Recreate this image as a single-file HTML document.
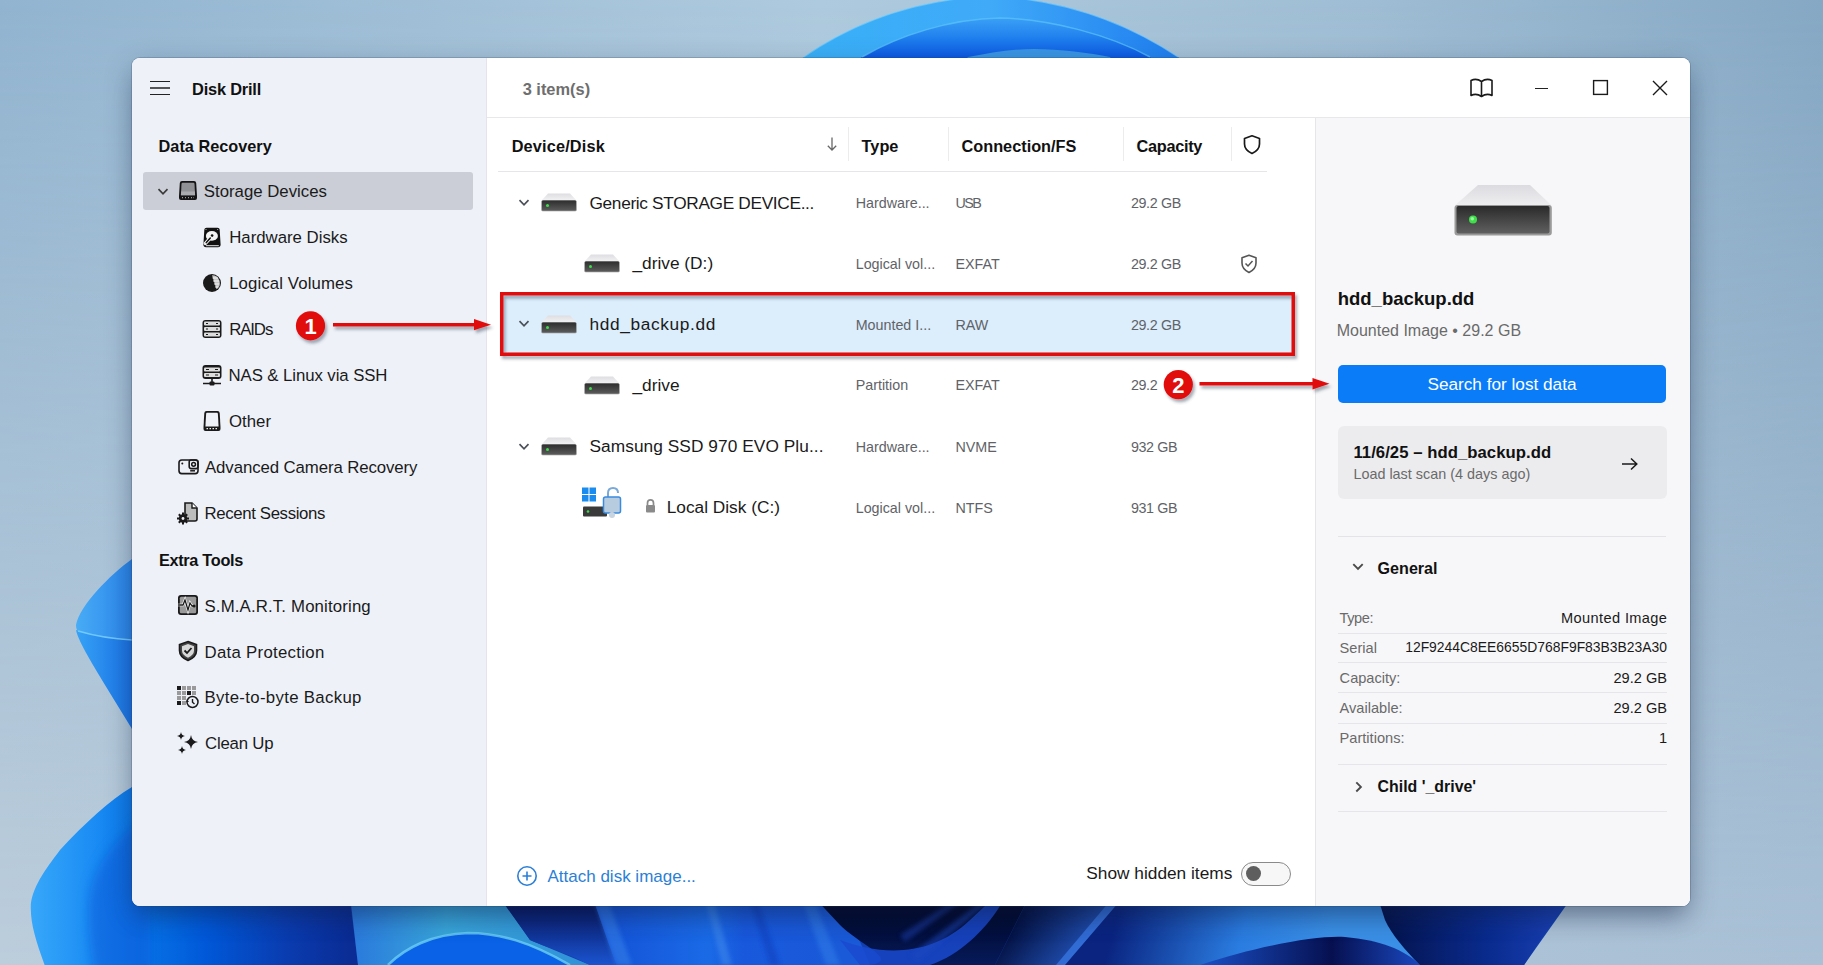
<!DOCTYPE html>
<html><head><meta charset="utf-8">
<style>
html,body{margin:0;padding:0;width:1823px;height:965px;overflow:hidden;}
body{position:relative;font-family:"Liberation Sans",sans-serif;background:#a7bdd3;}
.t{position:absolute;line-height:1;white-space:nowrap;}
</style></head><body>
<svg style="position:absolute;left:0;top:0" width="1823" height="965" viewBox="0 0 1823 965">
<defs>
<linearGradient id="bgg" x1="0" y1="0" x2="1823" y2="965" gradientUnits="userSpaceOnUse">
<stop offset="0" stop-color="#9dbcd6"/><stop offset="0.45" stop-color="#afc9dd"/><stop offset="1" stop-color="#a9c2d8"/>
</linearGradient>
<radialGradient id="bgr" cx="1800" cy="120" r="700" gradientUnits="userSpaceOnUse">
<stop offset="0" stop-color="#84a6c4"/><stop offset="1" stop-color="#84a6c4" stop-opacity="0"/>
</radialGradient>
<radialGradient id="bgl" cx="0" cy="200" r="500" gradientUnits="userSpaceOnUse">
<stop offset="0" stop-color="#98b6d2"/><stop offset="1" stop-color="#98b6d2" stop-opacity="0"/>
</radialGradient>
<linearGradient id="a1" x1="800" y1="0" x2="1180" y2="0" gradientUnits="userSpaceOnUse">
<stop offset="0" stop-color="#38b0f8"/><stop offset="0.5" stop-color="#40aaf8"/><stop offset="1" stop-color="#1f7ef0"/>
</linearGradient>
<linearGradient id="a2" x1="0" y1="18" x2="0" y2="58" gradientUnits="userSpaceOnUse">
<stop offset="0" stop-color="#3aa0f6"/><stop offset="0.5" stop-color="#2080ee"/><stop offset="1" stop-color="#0a58e4"/>
</linearGradient>
<linearGradient id="p1" x1="76" y1="0" x2="132" y2="0" gradientUnits="userSpaceOnUse">
<stop offset="0" stop-color="#48acf6"/><stop offset="1" stop-color="#2a84ea"/>
</linearGradient>
<linearGradient id="p2" x1="76" y1="0" x2="132" y2="0" gradientUnits="userSpaceOnUse">
<stop offset="0" stop-color="#36a2f6"/><stop offset="1" stop-color="#1a72e4"/>
</linearGradient>
<linearGradient id="l1" x1="30" y1="0" x2="350" y2="0" gradientUnits="userSpaceOnUse">
<stop offset="0" stop-color="#38a8fa"/><stop offset="0.2" stop-color="#1a8cf4"/><stop offset="0.35" stop-color="#0874e8"/><stop offset="0.55" stop-color="#0058d8"/><stop offset="0.8" stop-color="#0a3cb0"/><stop offset="1" stop-color="#0a2c94"/>
</linearGradient>
<linearGradient id="l1v" x1="0" y1="900" x2="0" y2="965" gradientUnits="userSpaceOnUse">
<stop offset="0" stop-color="#001050" stop-opacity="0.22"/><stop offset="1" stop-color="#001050" stop-opacity="0"/>
</linearGradient>
<linearGradient id="teal" x1="350" y1="0" x2="590" y2="0" gradientUnits="userSpaceOnUse">
<stop offset="0" stop-color="#2a78dc"/><stop offset="0.4" stop-color="#38a6da"/><stop offset="1" stop-color="#3090d8"/>
</linearGradient>
<linearGradient id="wedge" x1="0" y1="906" x2="0" y2="965" gradientUnits="userSpaceOnUse">
<stop offset="0" stop-color="#081660"/><stop offset="1" stop-color="#1a54d0"/>
</linearGradient>
<linearGradient id="mid" x1="600" y1="0" x2="840" y2="0" gradientUnits="userSpaceOnUse">
<stop offset="0" stop-color="#1452d6"/><stop offset="0.45" stop-color="#1a6ae6"/><stop offset="0.6" stop-color="#1858dc"/><stop offset="1" stop-color="#1a5ad8"/>
</linearGradient>
<linearGradient id="r1" x1="1120" y1="906" x2="1320" y2="965" gradientUnits="userSpaceOnUse">
<stop offset="0" stop-color="#0a2480"/><stop offset="0.6" stop-color="#2a7ce0"/><stop offset="1" stop-color="#3a90e6"/>
</linearGradient>
<linearGradient id="r2" x1="1380" y1="0" x2="1565" y2="0" gradientUnits="userSpaceOnUse">
<stop offset="0" stop-color="#04124a"/><stop offset="0.6" stop-color="#0a2c90"/><stop offset="1" stop-color="#1a40b4"/>
</linearGradient>
<linearGradient id="blob" x1="1200" y1="0" x2="1420" y2="0" gradientUnits="userSpaceOnUse">
<stop offset="0" stop-color="#1a50c8"/><stop offset="0.6" stop-color="#061050"/><stop offset="1" stop-color="#1a48c0"/>
</linearGradient>
<linearGradient id="dk" x1="0" y1="906" x2="0" y2="965" gradientUnits="userSpaceOnUse">
<stop offset="0" stop-color="#010626"/><stop offset="1" stop-color="#061a5a"/>
</linearGradient>
<linearGradient id="nv" x1="1030" y1="906" x2="1100" y2="965" gradientUnits="userSpaceOnUse">
<stop offset="0" stop-color="#031040"/><stop offset="1" stop-color="#2a64d8"/>
</linearGradient>
<linearGradient id="lp" x1="30" y1="0" x2="140" y2="0" gradientUnits="userSpaceOnUse">
<stop offset="0" stop-color="#3aa8f8"/><stop offset="0.5" stop-color="#3aa4f4"/><stop offset="1" stop-color="#2a8cf0"/>
</linearGradient>
<linearGradient id="lp2" x1="84" y1="0" x2="140" y2="0" gradientUnits="userSpaceOnUse">
<stop offset="0" stop-color="#2284ee" stop-opacity="0.3"/><stop offset="0.4" stop-color="#1a74e8"/><stop offset="1" stop-color="#1466e0"/>
</linearGradient>
<linearGradient id="topRow" x1="0" y1="0" x2="1823" y2="0" gradientUnits="userSpaceOnUse">
<stop offset="0" stop-color="#92b4d0"/><stop offset="0.45" stop-color="#aecade"/><stop offset="0.75" stop-color="#9fbdd4"/><stop offset="1" stop-color="#86a8c4"/>
</linearGradient>
<linearGradient id="botRow" x1="0" y1="0" x2="1823" y2="0" gradientUnits="userSpaceOnUse">
<stop offset="0" stop-color="#bccddb"/><stop offset="0.5" stop-color="#b2c7d9"/><stop offset="1" stop-color="#a9c0d5"/>
</linearGradient>
<linearGradient id="vg" x1="0" y1="0" x2="0" y2="965" gradientUnits="userSpaceOnUse">
<stop offset="0" stop-color="#000"/><stop offset="1" stop-color="#fff"/>
</linearGradient>
<mask id="vmask"><rect width="1823" height="965" fill="url(#vg)"/></mask>
<filter id="blur6" x="-50%" y="-50%" width="200%" height="200%"><feGaussianBlur stdDeviation="6"/></filter>
<filter id="blur2" x="-50%" y="-50%" width="200%" height="200%"><feGaussianBlur stdDeviation="2"/></filter>
</defs>
<rect width="1823" height="965" fill="url(#topRow)"/>
<rect width="1823" height="965" fill="url(#botRow)" mask="url(#vmask)"/>
<!-- top arch -->
<path d="M790 66 L804 57 C 850 25, 910 0, 990 -4 C 1070 0, 1130 25, 1178 57 L1190 66 Z" fill="url(#a1)"/>
<path d="M850 66 L862 57 C 900 35, 950 19, 1000 18 C 1050 19, 1110 35, 1150 57 L1160 66 Z" fill="url(#a2)"/>
<path d="M862 57 C 900 35, 950 19, 1000 18 C 1050 19, 1110 35, 1150 57" fill="none" stroke="#5cc4fa" stroke-width="1.5" opacity="0.7"/>
<path d="M804 57 C 850 25, 910 0, 990 -4 C 1070 0, 1130 25, 1178 57" fill="none" stroke="#7ad0fa" stroke-width="1.2" opacity="0.6"/>
<path d="M960 66 L968 57 C 990 53, 1010 49, 1034 49 C 1060 49, 1090 53, 1110 57 L1115 66 Z" fill="#3a96e4"/>
<!-- left upper petal -->
<path d="M140 540 L132 559 C 110 575, 80 605, 76 625 C 76 632, 80 634, 90 636 C 105 638, 120 640, 140 640 Z" fill="url(#p1)"/>
<path d="M76 630 C 78 640, 90 660, 105 685 L132 729 L140 740 L140 640 C 120 640, 100 637, 76 630 Z" fill="url(#p2)"/>
<path d="M78 631 C 95 636, 115 639, 132 640" fill="none" stroke="#7fd6ff" stroke-width="1.5" opacity="0.8"/>
<!-- left lower petal -->
<path d="M132 900 L1570 900 L1524 965 L132 965 Z" fill="#1240b0"/>
<path d="M140 780 L132 787 C 110 800, 85 823, 60 850 C 45 870, 30 890, 30.8 909 C 31 925, 36 941, 44.6 965 L358 965 L350 900 L140 900 Z" fill="url(#l1)"/>
<path d="M150 815 C 118 835, 96 862, 90 892 C 86 915, 90 945, 94 975 L150 975 Z" fill="#0a5ad8" opacity="0.55" filter="url(#blur6)"/>
<path d="M350 895 L498 895 L530 940 L590 965 L358 965 Z" fill="url(#teal)"/>
<path d="M388 965 C 405 948, 432 934, 468 933 C 500 933, 530 942, 570 965 Z" fill="#0a62e6"/>
<path d="M388 965 C 405 948, 432 934, 468 933 C 500 933, 530 942, 570 965" fill="none" stroke="#6cd0f4" stroke-width="2.5" opacity="0.8"/>
<path d="M498 895 L592 895 L616 965 L590 965 C 565 952, 540 945, 530 940 Z" fill="url(#wedge)"/>
<path d="M592 895 L840 895 L870 965 L616 965 Z" fill="url(#mid)"/>
<path d="M592 895 L606 895 L632 965 L616 965 Z" fill="#3a86ea" opacity="0.5" filter="url(#blur2)"/>
<path d="M704 895 L712 895 L732 965 L722 965 Z" fill="#4a92ee" opacity="0.45" filter="url(#blur2)"/>
<path d="M748 895 L756 895 L780 965 L770 965 Z" fill="#0a3ab8" opacity="0.45" filter="url(#blur2)"/>
<path d="M800 895 L812 895 L840 965 L826 965 Z" fill="#3a8aee" opacity="0.4" filter="url(#blur2)"/>
<path d="M812 895 L1030 895 L995 965 L870 965 C 900 960, 860 945, 840 925 Z" fill="url(#dk)"/>
<path d="M840 940 C 880 955, 930 958, 970 920 L985 906 L1000 906 C 985 930, 960 955, 930 965 L860 965 Z" fill="#1a4ad0" opacity="0.85"/>
<path d="M900 935 L962 895 L970 895 L905 942 Z" fill="#1a40b0" opacity="0.5" filter="url(#blur2)"/>
<path d="M910 955 L990 895 L998 895 L918 962 Z" fill="#1a48c0" opacity="0.5" filter="url(#blur2)"/>
<path d="M1030 895 L1125 895 L1065 965 L995 965 Z" fill="url(#nv)"/>
<path d="M1115 895 L1127 895 L1068 965 L1056 965 Z" fill="#3a7ae8" opacity="0.7"/>
<path d="M1125 895 L1380 895 C 1385 920, 1400 945, 1420 965 L1065 965 Z" fill="url(#r1)"/>
<path d="M1200 965 C 1260 945, 1320 935, 1345 937 C 1380 940, 1405 950, 1420 965 Z" fill="url(#blob)"/>
<path d="M1377 895 L1570 895 L1524 965 L1420 965 C 1405 950, 1392 935, 1385 920 Z" fill="url(#r2)"/>
</svg>
<div style="position:absolute;left:132px;top:58px;width:1558px;height:848px;border-radius:8px;overflow:hidden;box-shadow:0 0 0 1px rgba(40,60,80,0.22),0 8px 28px rgba(30,50,80,0.30),0 16px 24px -8px rgba(0,10,50,0.28);background:#fff;">
<div style="position:absolute;left:-132px;top:-58px;width:1823px;height:965px;">
<div style="position:absolute;left:132px;top:58px;width:354px;height:848px;background:#eef1f8;"></div>
<div style="position:absolute;left:486px;top:58px;width:1px;height:848px;background:#e3e5ea;"></div>
<div style="position:absolute;left:487px;top:58px;width:1203px;height:848px;background:#ffffff;"></div>
<div style="position:absolute;left:1315px;top:117px;width:375px;height:789px;background:#f7f7f9;"></div>
<div style="position:absolute;left:1315px;top:117px;width:1px;height:789px;background:#e6e6ea;"></div>
<div style="position:absolute;left:487px;top:117px;width:1203px;height:1px;background:#e8e8ea;"></div>
<div style="position:absolute;left:150px;top:80.5px;width:20px;height:1.5px;background:#222;"></div>
<div style="position:absolute;left:150px;top:87px;width:20px;height:1.5px;background:#555;"></div>
<div style="position:absolute;left:150px;top:93.5px;width:20px;height:1.5px;background:#222;"></div>
<div class="t" style="left:192.0px;top:80.8px;font-size:16.4px;font-weight:700;color:#111;letter-spacing:-0.200px;">Disk Drill</div>
<div class="t" style="left:522.7px;top:80.8px;font-size:16.4px;font-weight:700;color:#6e6e6e;">3 item(s)</div>
<svg style="position:absolute;left:1468px;top:76px" width="27" height="23" viewBox="0 0 27 23"><path d="M13.5 5.5 C 10 3, 6 3, 3 4.5 V 19.5 C 6 18, 10 18, 13.5 20.5 C 17 18, 21 18, 24 19.5 V 4.5 C 21 3, 17 3, 13.5 5.5 Z M13.5 5.5 V 20.5" fill="none" stroke="#1a1a1a" stroke-width="1.6" stroke-linejoin="round"/></svg>
<div style="position:absolute;left:1535px;top:87.8px;width:12.5px;height:1.2000000000000028px;background:#222;"></div>
<svg style="position:absolute;left:1592px;top:79px" width="17" height="17" viewBox="0 0 17 17"><rect x="1.6" y="1.6" width="13.8" height="13.8" fill="none" stroke="#1a1a1a" stroke-width="1.4"/></svg>
<svg style="position:absolute;left:1651px;top:79px" width="18" height="18" viewBox="0 0 18 18"><path d="M2 2 L16 16 M16 2 L2 16" stroke="#1a1a1a" stroke-width="1.4"/></svg>
<div class="t" style="left:158.6px;top:138.1px;font-size:16.3px;font-weight:700;color:#111;">Data Recovery</div>
<div style="position:absolute;left:143px;top:172px;width:330px;height:37.5px;background:#cbced6;border-radius:3px;"></div>
<svg style="position:absolute;left:157.2px;top:187.6px" width="12" height="8" viewBox="0 0 12 8"><path d="M1.5 1.2 L6 5.8 L10.5 1.2" fill="none" stroke="#3a3a3a" stroke-width="1.7"/></svg>
<svg style="position:absolute;left:178px;top:179.3px" width="20" height="22" viewBox="0 0 20 22"><path d="M4 2 H16 Q18 2 18.2 4 L19 17 V19 Q19 21 17 21 H3 Q1 21 1 19 V17 L1.8 4 Q2 2 4 2 Z" fill="#141414"/><path d="M4.5 3.8 H15.5 Q16.4 3.8 16.5 5 L17.1 16.3 H2.9 L3.5 5 Q3.6 3.8 4.5 3.8 Z" fill="#8f9195"/><path d="M3.2 12.5 H16.8 L17.1 16.3 H2.9 Z" fill="#a9abaf"/><path d="M4 18.6 H5 M7 18.6 H8 M10 18.6 H11 M13 18.6 H14 M15.5 18.6 H16" stroke="#9a9a9a" stroke-width="1.2"/></svg>
<div class="t" style="left:203.8px;top:184.4px;font-size:16.8px;font-weight:400;color:#1a1a1a;">Storage Devices</div>
<svg style="position:absolute;left:203px;top:226.5px" width="19" height="21" viewBox="0 0 19 21"><path d="M3.5 0.7 H14.5 Q16.5 0.7 16.7 2.7 L17.6 17.5 Q17.6 20.3 15 20.3 H3 Q0.4 20.3 0.4 17.5 L1.3 2.7 Q1.5 0.7 3.5 0.7 Z" fill="#111"/><ellipse cx="8.9" cy="8.9" rx="6" ry="4.9" fill="#f4f4f4"/><circle cx="9.1" cy="8.6" r="1.3" fill="#111"/><path d="M2.4 16.4 L7.3 11" stroke="#f4f4f4" stroke-width="3.4" stroke-linecap="round"/><path d="M2.6 16.2 L7.3 11" stroke="#111" stroke-width="1.5" stroke-linecap="round"/><circle cx="2.6" cy="16.2" r="0.7" fill="#fff"/><path d="M3 18.6 H15.8" stroke="#bdbdbd" stroke-width="1.2"/><circle cx="3" cy="2.5" r="0.5" fill="#ddd"/><circle cx="14.7" cy="2.5" r="0.5" fill="#ddd"/></svg>
<div class="t" style="left:229.2px;top:229.5px;font-size:16.8px;font-weight:400;color:#1a1a1a;">Hardware Disks</div>
<svg style="position:absolute;left:202px;top:273px" width="20" height="20" viewBox="0 0 20 20"><circle cx="10" cy="10" r="9" fill="#1a1a1a"/><path d="M10 2.3 A7.7 7.7 0 0 1 14.5 16.3 Z" fill="#c8c8c8"/><path d="M10.5 5 H16 M11 8 H17.3 M12 11 H17.3 M13 14 H16" stroke="#fff" stroke-width="0.8"/></svg>
<div class="t" style="left:229.2px;top:275.7px;font-size:16.8px;font-weight:400;color:#1a1a1a;letter-spacing:0.100px;">Logical Volumes</div>
<svg style="position:absolute;left:201px;top:319px" width="22" height="20" viewBox="0 0 22 20"><rect x="1.5" y="1" width="19" height="18" rx="3" fill="#1a1a1a"/><rect x="3" y="2.5" width="16" height="4" rx="1" fill="#ddd"/><rect x="3" y="8" width="16" height="4" rx="1" fill="#ddd"/><rect x="3" y="13.5" width="16" height="4" rx="1" fill="#ddd"/><path d="M5 4.5 H7 M5 10 H7 M5 15.5 H7 M15 4.5 H17 M15 10 H17 M15 15.5 H17" stroke="#1a1a1a" stroke-width="1.2"/></svg>
<div class="t" style="left:229.2px;top:321.8px;font-size:16.8px;font-weight:400;color:#1a1a1a;letter-spacing:-1.100px;">RAIDs</div>
<svg style="position:absolute;left:201px;top:364px" width="22" height="22" viewBox="0 0 22 22"><rect x="1.5" y="1" width="19" height="14" rx="3" fill="#1a1a1a"/><rect x="3" y="3.5" width="16" height="4" rx="1" fill="#ddd"/><rect x="3" y="9" width="16" height="4" rx="1" fill="#ddd"/><path d="M5 5.5 H8 M5 11 H8 M14 5.5 H17 M14 11 H17" stroke="#1a1a1a" stroke-width="1.2"/><path d="M11 15 V19 M2 19.5 H20" stroke="#1a1a1a" stroke-width="1.6"/><rect x="8.5" y="17.5" width="5" height="4" rx="1" fill="#1a1a1a"/></svg>
<div class="t" style="left:228.5px;top:367.7px;font-size:16.8px;font-weight:400;color:#1a1a1a;letter-spacing:-0.080px;">NAS &amp; Linux via SSH</div>
<svg style="position:absolute;left:202px;top:410px" width="20" height="22" viewBox="0 0 20 22"><path d="M4.5 1 H15.5 Q17.5 1 17.7 3 L18.5 17 V19 Q18.5 21 16.5 21 H3.5 Q1.5 21 1.5 19 V17 L2.3 3 Q2.5 1 4.5 1 Z" fill="#1a1a1a"/><path d="M5 2.8 H15 Q15.8 2.8 15.9 4 L16.6 16.5 H3.4 L4.1 4 Q4.2 2.8 5 2.8 Z" fill="#eef1f8"/><path d="M4.5 18.7 H6 M7.5 18.7 H9 M10.5 18.7 H12 M13.5 18.7 H15" stroke="#eee" stroke-width="1.2"/></svg>
<div class="t" style="left:229.0px;top:413.7px;font-size:16.8px;font-weight:400;color:#1a1a1a;">Other</div>
<svg style="position:absolute;left:177.5px;top:459.2px" width="21" height="16" viewBox="0 0 21 16"><rect x="1" y="1" width="19" height="13.6" rx="2.8" fill="none" stroke="#1a1a1a" stroke-width="1.6"/><rect x="11.2" y="1" width="8.8" height="8.6" rx="2" fill="none" stroke="#1a1a1a" stroke-width="1.6"/><circle cx="15.6" cy="5.3" r="1.9" fill="none" stroke="#1a1a1a" stroke-width="1.5"/><circle cx="4.3" cy="4.6" r="1" fill="#1a1a1a"/><path d="M12.2 11.8 H17" stroke="#1a1a1a" stroke-width="1.5"/></svg>
<div class="t" style="left:205.0px;top:459.5px;font-size:16.8px;font-weight:400;color:#1a1a1a;letter-spacing:-0.090px;">Advanced Camera Recovery</div>
<svg style="position:absolute;left:177px;top:502px" width="22" height="23" viewBox="0 0 22 23"><path d="M8 1 H15 L20 6 V17 Q20 19 18 19 H10 Q8 19 8 17 Z" fill="#bcbcbc" stroke="#1a1a1a" stroke-width="1.6"/><path d="M15 1 V6 H20" fill="#fff" stroke="#1a1a1a" stroke-width="1.4"/><circle cx="6" cy="16.5" r="4.2" fill="#1a1a1a"/><path d="M6 10.5 V22.5 M0 16.5 H12 M1.8 12.3 L10.2 20.7 M10.2 12.3 L1.8 20.7" stroke="#1a1a1a" stroke-width="2"/><circle cx="6" cy="16.5" r="1.4" fill="#eef1f8"/></svg>
<div class="t" style="left:204.5px;top:506.2px;font-size:16.8px;font-weight:400;color:#1a1a1a;letter-spacing:-0.360px;">Recent Sessions</div>
<div class="t" style="left:158.9px;top:552.1px;font-size:16.3px;font-weight:700;color:#111;letter-spacing:-0.300px;">Extra Tools</div>
<svg style="position:absolute;left:177px;top:594px" width="22" height="22" viewBox="0 0 22 22"><rect x="1" y="1" width="20" height="20" rx="3" fill="#1a1a1a"/><rect x="2.8" y="2.8" width="16.4" height="16.4" rx="1.5" fill="#9a9a9a"/><path d="M1 11 H6 L8 6 L11 16 L13 9 L15 12 H17" fill="none" stroke="#fff" stroke-width="2.6"/><path d="M1 11 H6 L8 6 L11 16 L13 9 L15 12 H17" fill="none" stroke="#1a1a1a" stroke-width="1.3"/><circle cx="17" cy="12" r="1.6" fill="#1a1a1a"/></svg>
<div class="t" style="left:204.5px;top:598.7px;font-size:16.8px;font-weight:400;color:#1a1a1a;letter-spacing:0.150px;">S.M.A.R.T. Monitoring</div>
<svg style="position:absolute;left:178px;top:640px" width="20" height="22" viewBox="0 0 20 22"><path d="M10 1.5 L18.5 4.5 V10.5 Q18.5 17 10 20.5 Q1.5 17 1.5 10.5 V4.5 Z" fill="#444" stroke="#1a1a1a" stroke-width="1.6"/><path d="M10 4 L16 6.2 V10.5 Q16 15 10 17.8 Q4 15 4 10.5 V6.2 Z" fill="#d8d8d8"/><path d="M6.5 10.5 L9 13 L13.5 8" fill="none" stroke="#1a1a1a" stroke-width="1.8"/></svg>
<div class="t" style="left:204.5px;top:644.7px;font-size:16.8px;font-weight:400;color:#1a1a1a;letter-spacing:0.290px;">Data Protection</div>
<svg style="position:absolute;left:176px;top:685px" width="24" height="24" viewBox="0 0 24 24"><g fill="#1a1a1a"><rect x="1" y="1" width="4" height="4"/><rect x="11" y="6" width="4" height="4"/><rect x="1" y="16" width="4" height="4"/></g><g fill="#9a9a9a"><rect x="6" y="1" width="4" height="4"/><rect x="11" y="1" width="4" height="4"/><rect x="16" y="1" width="4" height="4"/><rect x="1" y="6" width="4" height="4"/><rect x="6" y="6" width="4" height="4"/><rect x="16" y="6" width="4" height="4"/><rect x="1" y="11" width="4" height="4"/><rect x="6" y="11" width="4" height="4"/><rect x="6" y="16" width="4" height="4"/></g><circle cx="16.5" cy="17" r="5.5" fill="#eef1f8" stroke="#1a1a1a" stroke-width="1.5"/><path d="M16.5 14 V17.3 L18.5 19" fill="none" stroke="#1a1a1a" stroke-width="1.4"/><path d="M10 17 L11.5 15 L13 17" fill="#1a1a1a"/></svg>
<div class="t" style="left:204.5px;top:690.4px;font-size:16.8px;font-weight:400;color:#1a1a1a;letter-spacing:0.320px;">Byte-to-byte Backup</div>
<svg style="position:absolute;left:176px;top:731px" width="24" height="24" viewBox="0 0 24 24"><path d="M15 4 Q15.8 10.2 22 11 Q15.8 11.8 15 18 Q14.2 11.8 8 11 Q14.2 10.2 15 4 Z" fill="#1a1a1a"/><path d="M5 1 Q5.4 4.6 9 5 Q5.4 5.4 5 9 Q4.6 5.4 1 5 Q4.6 4.6 5 1 Z" fill="#1a1a1a"/><path d="M6 15 Q6.4 18.6 10 19 Q6.4 19.4 6 23 Q5.6 19.4 2 19 Q5.6 18.6 6 15 Z" fill="#1a1a1a"/></svg>
<div class="t" style="left:205.0px;top:736.2px;font-size:16.8px;font-weight:400;color:#1a1a1a;letter-spacing:-0.200px;">Clean Up</div>
<div class="t" style="left:511.7px;top:138.3px;font-size:16.3px;font-weight:700;color:#111;letter-spacing:0.160px;">Device/Disk</div>
<svg style="position:absolute;left:826px;top:136px" width="12" height="16" viewBox="0 0 12 16"><path d="M6 1.5 V14 M1.8 9.8 L6 14 L10.2 9.8" fill="none" stroke="#666" stroke-width="1.3"/></svg>
<div style="position:absolute;left:848px;top:127px;width:1px;height:34px;background:#ececec;"></div>
<div style="position:absolute;left:948px;top:127px;width:1px;height:34px;background:#ececec;"></div>
<div style="position:absolute;left:1123px;top:127px;width:1px;height:34px;background:#ececec;"></div>
<div style="position:absolute;left:1231px;top:127px;width:1px;height:34px;background:#ececec;"></div>
<div class="t" style="left:861.6px;top:138.3px;font-size:16.3px;font-weight:700;color:#111;">Type</div>
<div class="t" style="left:961.5px;top:138.3px;font-size:16.3px;font-weight:700;color:#111;">Connection/FS</div>
<div class="t" style="left:1136.5px;top:138.3px;font-size:16.3px;font-weight:700;color:#111;letter-spacing:-0.280px;">Capacity</div>
<svg style="position:absolute;left:1242px;top:134px" width="20" height="21" viewBox="0 0 20 21"><path d="M10 1.8 L17.5 4.5 V10 Q17.5 16 10 19.5 Q2.5 16 2.5 10 V4.5 Z" fill="none" stroke="#1a1a1a" stroke-width="1.7" stroke-linejoin="round"/></svg>
<div style="position:absolute;left:498px;top:171px;width:769px;height:1px;background:#e6e6e8;"></div>
<div style="position:absolute;left:500px;top:295px;width:795px;height:58px;background:#dcedfc;"></div>
<svg style="position:absolute;left:517.5px;top:198.7px" width="12" height="8" viewBox="0 0 12 8"><path d="M1.5 1.2 L6 5.8 L10.5 1.2" fill="none" stroke="#4a4f58" stroke-width="1.7"/></svg>
<svg style="position:absolute;left:540.5px;top:193.2px" width="36" height="19" viewBox="0 0 36 19"><defs><linearGradient id="dg" x1="0" y1="0" x2="0" y2="1"><stop offset="0" stop-color="#2e2e2e"/><stop offset="1" stop-color="#5a5a5a"/></linearGradient><linearGradient id="tg" x1="0" y1="0" x2="0" y2="1"><stop offset="0" stop-color="#dedee2"/><stop offset="1" stop-color="#f2f2f4"/></linearGradient></defs><path d="M7 0.5 H29 L35.5 7.5 H0.5 Z" fill="url(#tg)"/><rect x="0.3" y="7.3" width="35.4" height="11" rx="1.5" fill="#8c8c8c"/><rect x="1" y="7.5" width="34" height="10" rx="1" fill="url(#dg)"/><circle cx="6.5" cy="12.5" r="1.5" fill="#3ddc4a"/></svg>
<div class="t" style="left:589.5px;top:194.5px;font-size:17.3px;font-weight:400;color:#1a1a1a;letter-spacing:-0.340px;">Generic STORAGE DEVICE...</div>
<div class="t" style="left:855.7px;top:196.0px;font-size:14.3px;font-weight:400;color:#5f6368;">Hardware...</div>
<div class="t" style="left:955.4px;top:196.0px;font-size:14.3px;font-weight:400;color:#5f6368;letter-spacing:-1.500px;">USB</div>
<div class="t" style="left:1130.9px;top:196.0px;font-size:14.3px;font-weight:400;color:#5f6368;letter-spacing:-0.350px;">29.2 GB</div>
<svg style="position:absolute;left:583.5px;top:253.8px" width="36" height="19" viewBox="0 0 36 19"><defs><linearGradient id="dg" x1="0" y1="0" x2="0" y2="1"><stop offset="0" stop-color="#2e2e2e"/><stop offset="1" stop-color="#5a5a5a"/></linearGradient><linearGradient id="tg" x1="0" y1="0" x2="0" y2="1"><stop offset="0" stop-color="#dedee2"/><stop offset="1" stop-color="#f2f2f4"/></linearGradient></defs><path d="M7 0.5 H29 L35.5 7.5 H0.5 Z" fill="url(#tg)"/><rect x="0.3" y="7.3" width="35.4" height="11" rx="1.5" fill="#8c8c8c"/><rect x="1" y="7.5" width="34" height="10" rx="1" fill="url(#dg)"/><circle cx="6.5" cy="12.5" r="1.5" fill="#3ddc4a"/></svg>
<div class="t" style="left:632.5px;top:255.1px;font-size:17.3px;font-weight:400;color:#1a1a1a;">_drive (D:)</div>
<div class="t" style="left:855.7px;top:256.6px;font-size:14.3px;font-weight:400;color:#5f6368;">Logical vol...</div>
<div class="t" style="left:955.4px;top:256.6px;font-size:14.3px;font-weight:400;color:#5f6368;">EXFAT</div>
<div class="t" style="left:1130.9px;top:256.6px;font-size:14.3px;font-weight:400;color:#5f6368;letter-spacing:-0.350px;">29.2 GB</div>
<svg style="position:absolute;left:517.5px;top:320.3px" width="12" height="8" viewBox="0 0 12 8"><path d="M1.5 1.2 L6 5.8 L10.5 1.2" fill="none" stroke="#4a4f58" stroke-width="1.7"/></svg>
<svg style="position:absolute;left:540.5px;top:314.8px" width="36" height="19" viewBox="0 0 36 19"><defs><linearGradient id="dg" x1="0" y1="0" x2="0" y2="1"><stop offset="0" stop-color="#2e2e2e"/><stop offset="1" stop-color="#5a5a5a"/></linearGradient><linearGradient id="tg" x1="0" y1="0" x2="0" y2="1"><stop offset="0" stop-color="#dedee2"/><stop offset="1" stop-color="#f2f2f4"/></linearGradient></defs><path d="M7 0.5 H29 L35.5 7.5 H0.5 Z" fill="url(#tg)"/><rect x="0.3" y="7.3" width="35.4" height="11" rx="1.5" fill="#8c8c8c"/><rect x="1" y="7.5" width="34" height="10" rx="1" fill="url(#dg)"/><circle cx="6.5" cy="12.5" r="1.5" fill="#3ddc4a"/></svg>
<div class="t" style="left:589.5px;top:316.1px;font-size:17.3px;font-weight:400;color:#1a1a1a;letter-spacing:0.640px;">hdd_backup.dd</div>
<div class="t" style="left:855.7px;top:317.6px;font-size:14.3px;font-weight:400;color:#5f6368;">Mounted I...</div>
<div class="t" style="left:955.4px;top:317.6px;font-size:14.3px;font-weight:400;color:#5f6368;">RAW</div>
<div class="t" style="left:1130.9px;top:317.6px;font-size:14.3px;font-weight:400;color:#5f6368;letter-spacing:-0.350px;">29.2 GB</div>
<svg style="position:absolute;left:583.5px;top:375.5px" width="36" height="19" viewBox="0 0 36 19"><defs><linearGradient id="dg" x1="0" y1="0" x2="0" y2="1"><stop offset="0" stop-color="#2e2e2e"/><stop offset="1" stop-color="#5a5a5a"/></linearGradient><linearGradient id="tg" x1="0" y1="0" x2="0" y2="1"><stop offset="0" stop-color="#dedee2"/><stop offset="1" stop-color="#f2f2f4"/></linearGradient></defs><path d="M7 0.5 H29 L35.5 7.5 H0.5 Z" fill="url(#tg)"/><rect x="0.3" y="7.3" width="35.4" height="11" rx="1.5" fill="#8c8c8c"/><rect x="1" y="7.5" width="34" height="10" rx="1" fill="url(#dg)"/><circle cx="6.5" cy="12.5" r="1.5" fill="#3ddc4a"/></svg>
<div class="t" style="left:632.5px;top:376.8px;font-size:17.3px;font-weight:400;color:#1a1a1a;">_drive</div>
<div class="t" style="left:855.7px;top:378.3px;font-size:14.3px;font-weight:400;color:#5f6368;">Partition</div>
<div class="t" style="left:955.4px;top:378.3px;font-size:14.3px;font-weight:400;color:#5f6368;">EXFAT</div>
<div class="t" style="left:1130.9px;top:378.3px;font-size:14.3px;font-weight:400;color:#5f6368;letter-spacing:-0.350px;">29.2</div>
<svg style="position:absolute;left:517.5px;top:442.5px" width="12" height="8" viewBox="0 0 12 8"><path d="M1.5 1.2 L6 5.8 L10.5 1.2" fill="none" stroke="#4a4f58" stroke-width="1.7"/></svg>
<svg style="position:absolute;left:540.5px;top:437.0px" width="36" height="19" viewBox="0 0 36 19"><defs><linearGradient id="dg" x1="0" y1="0" x2="0" y2="1"><stop offset="0" stop-color="#2e2e2e"/><stop offset="1" stop-color="#5a5a5a"/></linearGradient><linearGradient id="tg" x1="0" y1="0" x2="0" y2="1"><stop offset="0" stop-color="#dedee2"/><stop offset="1" stop-color="#f2f2f4"/></linearGradient></defs><path d="M7 0.5 H29 L35.5 7.5 H0.5 Z" fill="url(#tg)"/><rect x="0.3" y="7.3" width="35.4" height="11" rx="1.5" fill="#8c8c8c"/><rect x="1" y="7.5" width="34" height="10" rx="1" fill="url(#dg)"/><circle cx="6.5" cy="12.5" r="1.5" fill="#3ddc4a"/></svg>
<div class="t" style="left:589.5px;top:438.3px;font-size:17.3px;font-weight:400;color:#1a1a1a;letter-spacing:0.060px;">Samsung SSD 970 EVO Plu...</div>
<div class="t" style="left:855.7px;top:439.8px;font-size:14.3px;font-weight:400;color:#5f6368;">Hardware...</div>
<div class="t" style="left:955.4px;top:439.8px;font-size:14.3px;font-weight:400;color:#5f6368;">NVME</div>
<div class="t" style="left:1130.9px;top:439.8px;font-size:14.3px;font-weight:400;color:#5f6368;letter-spacing:-0.350px;">932 GB</div>
<div class="t" style="left:666.7px;top:499.4px;font-size:17.3px;font-weight:400;color:#1a1a1a;">Local Disk (C:)</div>
<div class="t" style="left:855.7px;top:500.9px;font-size:14.3px;font-weight:400;color:#5f6368;">Logical vol...</div>
<div class="t" style="left:955.4px;top:500.9px;font-size:14.3px;font-weight:400;color:#5f6368;">NTFS</div>
<div class="t" style="left:1130.9px;top:500.9px;font-size:14.3px;font-weight:400;color:#5f6368;letter-spacing:-0.350px;">931 GB</div>
<svg style="position:absolute;left:1240px;top:254px" width="18" height="20" viewBox="0 0 18 20"><path d="M9 1.3 L16 3.8 V9 Q16 15 9 18.5 Q2 15 2 9 V3.8 Z" fill="none" stroke="#555" stroke-width="1.6" stroke-linejoin="round"/><path d="M5.5 9.5 L8 12 L12.5 7" fill="none" stroke="#555" stroke-width="1.5"/></svg>
<svg style="position:absolute;left:580px;top:485px" width="44" height="34" viewBox="0 0 44 34"><rect x="2" y="2.5" width="6.5" height="6.5" fill="#1a8cf0"/><rect x="9.5" y="2.5" width="6.5" height="6.5" fill="#1a8cf0"/><rect x="2" y="10" width="6.5" height="6.5" fill="#1a8cf0"/><rect x="9.5" y="10" width="6.5" height="6.5" fill="#1a8cf0"/><rect x="3" y="21.5" width="24" height="10" rx="1" fill="#3a3a3a"/><circle cx="8" cy="26.5" r="1.3" fill="#3ddc4a"/><path d="M28 12 V8 Q28 3 33 3 Q38 3 38 8" fill="none" stroke="#7aa8d8" stroke-width="2"/><rect x="23.5" y="12" width="17" height="16" rx="2" fill="#b8cce0" stroke="#3a8ae0" stroke-width="1.5"/><circle cx="32" cy="30" r="3" fill="#c8d4e0"/></svg>
<svg style="position:absolute;left:644px;top:498px" width="13" height="16" viewBox="0 0 13 16"><path d="M3.5 7 V5 Q3.5 1.8 6.5 1.8 Q9.5 1.8 9.5 5 V7" fill="none" stroke="#8a8a8a" stroke-width="1.7"/><rect x="2" y="7" width="9" height="7.5" rx="1" fill="#8a8a8a"/></svg>
<svg style="position:absolute;left:515px;top:864px" width="24" height="24" viewBox="0 0 24 24"><circle cx="12" cy="12" r="9.2" fill="none" stroke="#2b7fd6" stroke-width="1.6"/><path d="M12 7.5 V16.5 M7.5 12 H16.5" stroke="#2b7fd6" stroke-width="1.6"/></svg>
<div class="t" style="left:547.5px;top:867.5px;font-size:17px;font-weight:400;color:#2b7fd6;">Attach disk image...</div>
<div class="t" style="left:1086.3px;top:864.9px;font-size:17.3px;font-weight:400;color:#1a1a1a;">Show hidden items</div>
<div style="position:absolute;left:1241px;top:861.5px;width:50px;height:24.0px;box-sizing:border-box;border:1.3px solid #8a8a8a;border-radius:12px;background:#f7f7f7;"></div>
<div style="position:absolute;left:1246px;top:866px;width:15px;height:15px;background:#5e5e5e;border-radius:50%;"></div>
<svg style="position:absolute;left:1450px;top:180px" width="106" height="60" viewBox="0 0 106 60"><defs><linearGradient id="bdg" x1="0" y1="0" x2="0" y2="1"><stop offset="0" stop-color="#2a2a2a"/><stop offset="1" stop-color="#606060"/></linearGradient><linearGradient id="btg" x1="0" y1="0" x2="0" y2="1"><stop offset="0" stop-color="#dcdce0"/><stop offset="1" stop-color="#eeeef1"/></linearGradient></defs><path d="M28 5 H80 L101.7 25.5 H4.8 Z" fill="url(#btg)"/><rect x="4.5" y="25" width="97.3" height="30.5" rx="3" fill="#9a9a9a"/><rect x="6.5" y="26" width="93" height="27.5" rx="2" fill="url(#bdg)"/><circle cx="23" cy="39.5" r="4" fill="#3ee04a"/><circle cx="22.3" cy="38.8" r="1.8" fill="#9af59f"/></svg>
<div class="t" style="left:1337.7px;top:289.6px;font-size:18.5px;font-weight:700;color:#111;">hdd_backup.dd</div>
<div class="t" style="left:1336.7px;top:322.9px;font-size:16px;font-weight:400;color:#6a6a6a;">Mounted Image • 29.2 GB</div>
<div style="position:absolute;left:1338px;top:365px;width:328px;height:38px;background:#0a7cf8;border-radius:5px;"></div>
<div class="t" style="left:1338px;width:328px;text-align:center;top:376.3px;font-size:17.2px;color:#fff;">Search for lost data</div>
<div style="position:absolute;left:1338px;top:425.5px;width:329px;height:73.5px;background:#ececef;border-radius:6px;"></div>
<div class="t" style="left:1353.4px;top:445.3px;font-size:16.7px;font-weight:700;color:#111;letter-spacing:0.050px;">11/6/25 – hdd_backup.dd</div>
<div class="t" style="left:1353.4px;top:466.6px;font-size:14.4px;font-weight:400;color:#6a6a6a;">Load last scan (4 days ago)</div>
<svg style="position:absolute;left:1620px;top:456px" width="20" height="16" viewBox="0 0 20 16"><path d="M2 8 H17 M11 2.5 L16.8 8 L11 13.5" fill="none" stroke="#1a1a1a" stroke-width="1.5"/></svg>
<div style="position:absolute;left:1338px;top:536px;width:328px;height:1px;background:#e4e4e8;"></div>
<svg style="position:absolute;left:1352.2px;top:563.4px" width="12" height="8" viewBox="0 0 12 8"><path d="M1.3 1.2 L6 6 L10.7 1.2" fill="none" stroke="#4a4a4a" stroke-width="1.9"/></svg>
<div class="t" style="left:1377.6px;top:560.1px;font-size:16.1px;font-weight:700;color:#111;">General</div>
<div class="t" style="left:1339.6px;top:610.7px;font-size:14.6px;font-weight:400;color:#6a6a6a;letter-spacing:-0.450px;">Type:</div>
<div class="t" style="right:156.0px;top:610.7px;font-size:14.6px;font-weight:400;color:#1a1a1a;letter-spacing:0.380px;margin-right:-0.380px;">Mounted Image</div>
<div class="t" style="left:1339.6px;top:640.5px;font-size:14.6px;font-weight:400;color:#6a6a6a;">Serial</div>
<div class="t" style="right:156.0px;top:641.1px;font-size:13.9px;font-weight:400;color:#1a1a1a;">12F9244C8EE6655D768F9F83B3B23A30</div>
<div class="t" style="left:1339.6px;top:670.8px;font-size:14.6px;font-weight:400;color:#6a6a6a;">Capacity:</div>
<div class="t" style="right:156.0px;top:670.8px;font-size:14.6px;font-weight:400;color:#1a1a1a;">29.2 GB</div>
<div class="t" style="left:1339.6px;top:700.6px;font-size:14.6px;font-weight:400;color:#6a6a6a;">Available:</div>
<div class="t" style="right:156.0px;top:700.6px;font-size:14.6px;font-weight:400;color:#1a1a1a;">29.2 GB</div>
<div class="t" style="left:1339.6px;top:730.6px;font-size:14.6px;font-weight:400;color:#6a6a6a;">Partitions:</div>
<div class="t" style="right:156.0px;top:730.6px;font-size:14.6px;font-weight:400;color:#1a1a1a;">1</div>
<div style="position:absolute;left:1338px;top:632.5px;width:329px;height:1.0px;background:#e6e6ea;"></div>
<div style="position:absolute;left:1338px;top:662px;width:329px;height:1px;background:#e6e6ea;"></div>
<div style="position:absolute;left:1338px;top:692px;width:329px;height:1px;background:#e6e6ea;"></div>
<div style="position:absolute;left:1338px;top:722.5px;width:329px;height:1.0px;background:#e6e6ea;"></div>
<div style="position:absolute;left:1338px;top:763.5px;width:329px;height:1.0px;background:#e6e6ea;"></div>
<div style="position:absolute;left:1338px;top:810.5px;width:329px;height:1.0px;background:#e6e6ea;"></div>
<svg style="position:absolute;left:1355px;top:780.8px" width="8" height="12" viewBox="0 0 8 12"><path d="M1.3 1.3 L5.9 5.9 L1.3 10.5" fill="none" stroke="#4a4a4a" stroke-width="1.9"/></svg>
<div class="t" style="left:1377.6px;top:779.1px;font-size:15.9px;font-weight:700;color:#111;">Child '_drive'</div>
</div></div>
<svg style="position:absolute;left:0;top:0" width="1823" height="965" viewBox="0 0 1823 965">
<defs><filter id="sh" x="-5%" y="-50%" width="110%" height="200%"><feDropShadow dx="2" dy="3" stdDeviation="1.5" flood-color="#3a4a5a" flood-opacity="0.45"/></filter></defs>
<g filter="url(#sh)">
<rect x="501.75" y="293.75" width="791.5" height="60.5" fill="none" stroke="#e10a0a" stroke-width="3.5"/>
<line x1="333" y1="324.7" x2="476" y2="324.7" stroke="#e10a0a" stroke-width="3.5"/>
<path d="M474 319 L491 324.7 L474 330.2 Z" fill="#e10a0a"/>
<line x1="1199.5" y1="383.7" x2="1314" y2="383.7" stroke="#e10a0a" stroke-width="3.5"/>
<path d="M1312.5 378 L1329.5 383.7 L1312.5 389.4 Z" fill="#e10a0a"/>
<circle cx="310.5" cy="325.8" r="14.6" fill="#e10a0a"/>
<circle cx="1178.3" cy="384.6" r="14.6" fill="#e10a0a"/>
</g>
<text x="310.5" y="334" text-anchor="middle" font-family="Liberation Sans" font-weight="700" font-size="22" fill="#fff">1</text>
<text x="1178.3" y="392.8" text-anchor="middle" font-family="Liberation Sans" font-weight="700" font-size="22" fill="#fff">2</text>
</svg>
</body></html>
